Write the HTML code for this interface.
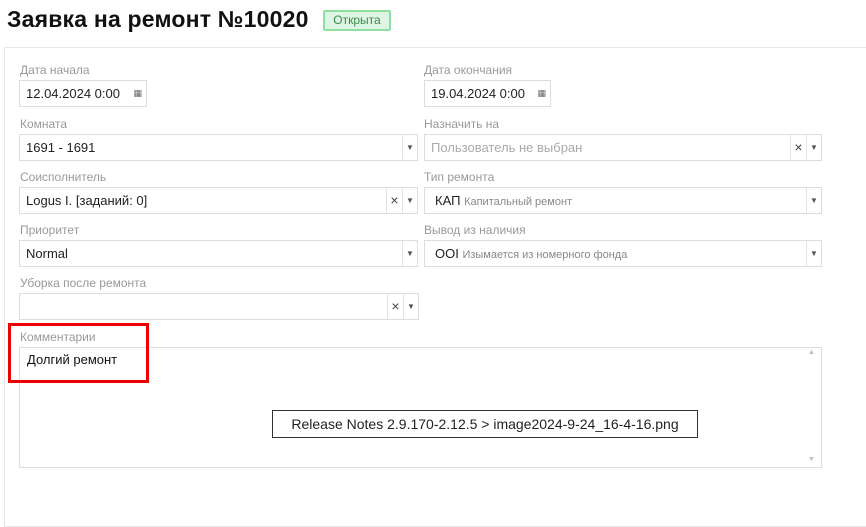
<!DOCTYPE html>
<html><head><meta charset="utf-8"><style>
*{box-sizing:border-box;margin:0;padding:0}
body{width:866px;height:504px;background:#fff;font-family:"Liberation Sans","DejaVu Sans",sans-serif;position:relative;overflow:hidden;color:#222}
.a{position:absolute}
h1{position:absolute;left:7px;top:6px;font-size:23px;font-weight:bold;color:#111;letter-spacing:0.2px}
.badge{left:323px;top:10px;width:68px;height:21px;border:2px solid #8ee0a0;background:#dff5e3;border-radius:2px;font-size:12px;color:#3a8a4a;text-align:center;line-height:17px}
.panel{left:4px;top:47px;width:900px;height:480px;border:1px solid #e6e6e6}
.lbl{font-size:12px;color:#999}
.box{border:1px solid #ddd;height:27px;font-size:13px;line-height:25px;padding-left:6px;background:#fff}
.btn{position:absolute;top:0;bottom:0;width:15px;border-left:1px solid #e3e3e3;font-size:8px;color:#555;text-align:center;line-height:25px}
.x{position:absolute;top:0;right:15px;width:16px;border-left:1px solid #e3e3e3;bottom:0;text-align:center;font-size:14px;color:#444;line-height:24px}
.sub{font-size:11px;color:#888}
</style></head><body>
<h1>Заявка на ремонт №10020</h1>
<div class="a badge">Открыта</div>
<div class="a panel"></div>

<div class="a lbl" style="left:20px;top:63px">Дата начала</div>
<div class="a box" style="left:19px;top:80px;width:128px">12.04.2024 0:00<span style="position:absolute;right:4px;font-size:9px;color:#666">▦</span></div>
<div class="a lbl" style="left:424px;top:63px">Дата окончания</div>
<div class="a box" style="left:424px;top:80px;width:127px">19.04.2024 0:00<span style="position:absolute;right:4px;font-size:9px;color:#666">▦</span></div>

<div class="a lbl" style="left:20px;top:117px">Комната</div>
<div class="a box" style="left:19px;top:134px;width:399px">1691 - 1691<div class="btn" style="right:0">▼</div></div>
<div class="a lbl" style="left:424px;top:117px">Назначить на</div>
<div class="a box" style="left:424px;top:134px;width:398px;color:#aaa">Пользователь не выбран<div class="x">×</div><div class="btn" style="right:0">▼</div></div>

<div class="a lbl" style="left:20px;top:170px">Соисполнитель</div>
<div class="a box" style="left:19px;top:187px;width:399px">Logus I. [заданий: 0]<div class="x">×</div><div class="btn" style="right:0">▼</div></div>
<div class="a lbl" style="left:424px;top:170px">Тип ремонта</div>
<div class="a box" style="left:424px;top:187px;width:398px;padding-left:10px">КАП <span class="sub">Капитальный ремонт</span><div class="btn" style="right:0">▼</div></div>

<div class="a lbl" style="left:20px;top:223px">Приоритет</div>
<div class="a box" style="left:19px;top:240px;width:399px">Normal<div class="btn" style="right:0">▼</div></div>
<div class="a lbl" style="left:424px;top:223px">Вывод из наличия</div>
<div class="a box" style="left:424px;top:240px;width:398px;padding-left:10px">OOI <span class="sub">Изымается из номерного фонда</span><div class="btn" style="right:0">▼</div></div>

<div class="a lbl" style="left:20px;top:276px">Уборка после ремонта</div>
<div class="a box" style="left:19px;top:293px;width:400px"><div class="x">×</div><div class="btn" style="right:0">▼</div></div>

<div class="a lbl" style="left:20px;top:330px">Комментарии</div>
<div class="a" style="left:19px;top:347px;width:803px;height:121px;border:1px solid #ddd"></div>
<div class="a" style="left:27px;top:352px;font-size:13px;color:#111">Долгий ремонт</div>
<div class="a" style="left:808px;top:349px;font-size:7px;color:#bbb">▲</div>
<div class="a" style="left:808px;top:456px;font-size:7px;color:#bbb">▼</div>
<div class="a" style="left:8px;top:323px;width:141px;height:60px;border:3px solid #e00"></div>
<div class="a" style="left:272px;top:410px;width:426px;height:28px;border:1px solid #333;background:#fff;font-size:14px;line-height:26px;text-align:center;color:#222">Release Notes 2.9.170-2.12.5 &gt; image2024-9-24_16-4-16.png</div>
</body></html>
